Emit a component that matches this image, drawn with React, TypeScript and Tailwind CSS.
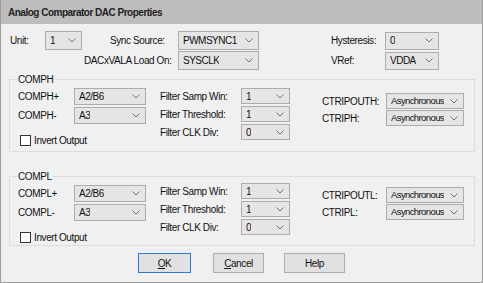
import React from 'react';

function Chevron() {
    return (
        <svg width="8" height="5" viewBox="0 0 8 5" className="shrink-0">
            <path d="M0.5 0.5 L4 4 L7.5 0.5" fill="none" stroke="#707070" strokeWidth="1" />
        </svg>
    );
}

function Combo({ value, className, tight }: { value: string; className: string; tight?: boolean }) {
    return (
        <div
            className={`flex shrink-0 items-center justify-between gap-[2px] border border-[#acacac] bg-[#e5e5e5] pl-[4px] pr-[5px] ${className}`}
        >
            <span
                className={`min-w-0 overflow-hidden whitespace-nowrap ${tight ? 'text-[9.5px] tracking-[-0.6px]' : 'tracking-[-0.5px]'}`}
            >
                {value}
            </span>
            <Chevron />
        </div>
    );
}

interface RowProps {
    label: string;
    labelW: string;
    value: string;
    comboW: string;
    h: string;
    tight?: boolean;
}

function Row({ label, labelW, value, comboW, h, tight }: RowProps) {
    return (
        <div className="flex items-center">
            <span className={`shrink-0 ${labelW}`}>{label}</span>
            <Combo value={value} className={`${comboW} ${h}`} tight={tight} />
        </div>
    );
}

interface GroupProps {
    name: string;
    className: string;
    col2Top: string;
    col3Top: string;
    outLabel: string;
    tripLabel: string;
}

function Group({ name, className, col2Top, col3Top, outLabel, tripLabel }: GroupProps) {
    return (
        <div className={`relative ml-[8px] w-[466px] border border-[#dcdcdc] ${className}`}>
            <span className="absolute -top-[7px] left-[7px] bg-[#f0f0f0] px-[1px] leading-[13px]">{name}</span>
            <div className="flex pl-[8px] pt-[8px]">
                <div className="flex w-[142px] flex-col gap-[2px]">
                    <Row label={`${name}+`} labelW="w-[56px]" value="A2/B6" comboW="w-[72px]" h="h-[17px]" />
                    <Row label={`${name}-`} labelW="w-[56px]" value="A3" comboW="w-[72px]" h="h-[17px]" />
                    <div className="mt-[7px] flex items-center gap-[3px] pl-[2px]">
                        <div className="h-[11px] w-[11px] border border-[#333333] bg-white" />
                        <span>Invert Output</span>
                    </div>
                </div>
                <div className={`flex w-[162px] flex-col gap-[2px] ${col2Top}`}>
                    <Row label="Filter Samp Win:" labelW="w-[81px]" value="1" comboW="w-[49px]" h="h-[16px]" />
                    <Row label="Filter Threshold:" labelW="w-[81px]" value="1" comboW="w-[49px]" h="h-[16px]" />
                    <Row label="Filter CLK Div:" labelW="w-[81px]" value="0" comboW="w-[49px]" h="h-[16px]" />
                </div>
                <div className={`flex flex-col gap-[1px] ${col3Top}`}>
                    <Row label={outLabel} labelW="w-[64px]" value="Asynchronous" comboW="w-[78px]" h="h-[16px]" tight />
                    <Row label={tripLabel} labelW="w-[64px]" value="Asynchronous" comboW="w-[78px]" h="h-[16px]" tight />
                </div>
            </div>
        </div>
    );
}

export default function App() {
    return (
        <div className="flex h-[283px] w-[483px] flex-col overflow-hidden border-x border-b border-[#9c9c9c] bg-[#f0f0f0] font-['Liberation_Sans',Arial,sans-serif] text-[10px] tracking-[-0.4px] text-[#111111]">
            <div className="flex h-[24px] shrink-0 items-center bg-[#bdbdbd] pl-[7px] text-[10px] font-bold tracking-[-0.5px] text-[#222222]">
                Analog Comparator DAC Properties
            </div>

            <div className="mt-[7px] flex h-[19px] items-center pl-[9px]">
                <span className="w-[35px] shrink-0">Unit:</span>
                <Combo value="1" className="h-[19px] w-[37px]" />
                <span className="w-[96px] shrink-0 pl-[28px]">Sync Source:</span>
                <Combo value="PWMSYNC1" className="h-[19px] w-[81px]" />
                <span className="w-[126px] shrink-0 pl-[72px]">Hysteresis:</span>
                <Combo value="0" className="h-[18px] w-[54px]" />
            </div>
            <div className="mt-[1px] flex h-[19px] items-center pl-[83px]">
                <span className="w-[94px] shrink-0">DACxVALA Load On:</span>
                <Combo value="SYSCLK" className="h-[19px] w-[81px]" />
                <span className="w-[126px] shrink-0 pl-[72px]">VRef:</span>
                <Combo value="VDDA" className="h-[18px] w-[54px]" />
            </div>

            <Group
                name="COMPH"
                className="mt-[9px] h-[73px]"
                col2Top=""
                col3Top="pt-[5px]"
                outLabel="CTRIPOUTH:"
                tripLabel="CTRIPH:"
            />
            <Group
                name="COMPL"
                className="mt-[24px] h-[70px]"
                col2Top="-mt-[2px]"
                col3Top="pt-[2px]"
                outLabel="CTRIPOUTL:"
                tripLabel="CTRIPL:"
            />

            <div className="mt-[7px] flex h-[20px] pl-[137px]">
                <button className="h-full w-[53px] border border-[#2f7ad6] bg-[#e1e1e1]">
                    <span className="underline">O</span>K
                </button>
                <button className="ml-[22px] h-full w-[51px] border border-[#adadad] bg-[#e1e1e1]">
                    <span className="underline">C</span>ancel
                </button>
                <button className="ml-[20px] h-full w-[61px] border border-[#adadad] bg-[#e1e1e1]">Help</button>
            </div>
        </div>
    );
}
